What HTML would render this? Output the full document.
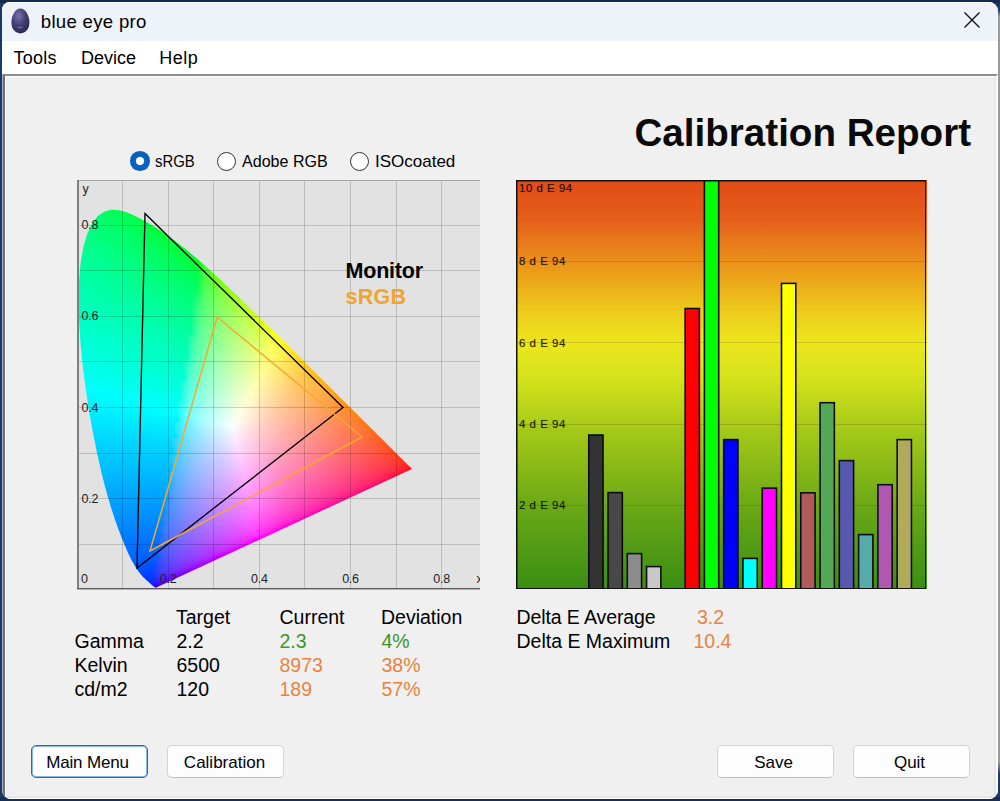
<!DOCTYPE html>
<html><head><meta charset="utf-8"><title>blue eye pro</title>
<style>
html,body{margin:0;padding:0}
body{width:1000px;height:801px;position:relative;overflow:hidden;background:#163a6c;font-family:"Liberation Sans",sans-serif;color:#000}
.a{position:absolute}
#win{left:2px;top:2px;width:996px;height:797px;background:#f0f0f0;border-radius:8px 9px 9px 9px;overflow:hidden}
#rs{left:996px;top:10px;width:4px;height:764px;background:linear-gradient(180deg,#163a6c 0,#9a9a9a 6px,#9a9a9a 752px,#163a6c 764px)}
#tb{left:0;top:0;width:100%;height:39px;background:#eef3f9;box-shadow:inset 0 1px 0 #fbfcfe}
#mb{left:0;top:39px;width:100%;height:33px;background:#fff}
#cl{left:0;top:72px;width:996px;height:725px;box-sizing:border-box;border-left:3.2px solid #707070;border-top:2px solid #8c8c8c;border-right:2px solid #fff;border-bottom:1.6px solid #fff;background:#f0f0f0;box-shadow:inset 1px 1px 0 #fff,inset -2px -2px 0 #e6e6e6}
#cl2{left:0;top:72px;width:1px;height:726px;background:#a8b0be}
.t{position:absolute;white-space:nowrap;line-height:1}
#cie{left:77px;top:180px;width:402.5px;height:409.5px;background:#e2e2e2;overflow:hidden}
#cie .bl{position:absolute;left:0;top:0;width:1.8px;height:100%;background:#808080}
#cie .bb{position:absolute;left:0;bottom:0;width:100%;height:2px;background:linear-gradient(180deg,#5e5e5e 0 1px,#b4b4b4 1px 2px)}
#cie .bt{position:absolute;left:0;top:-.5px;width:100%;height:1px;background:#a4a4a4}
#cie .f{position:absolute;left:0;top:0;width:402px;height:409px;clip-path:polygon(79.3px 407.6px,78.9px 407.7px,78.1px 407.6px,74.9px 404.9px,74.3px 404.5px,73.7px 403.9px,73.0px 403.3px,72.2px 402.6px,71.3px 401.8px,70.4px 401.0px,69.3px 400.0px,68.2px 399.0px,66.9px 397.8px,65.5px 396.4px,64.1px 394.8px,62.5px 392.8px,60.8px 390.4px,58.8px 387.4px,56.5px 383.5px,54.0px 379.0px,51.3px 373.5px,48.4px 366.8px,45.1px 358.8px,41.5px 349.4px,37.6px 338.4px,33.4px 325.5px,29.1px 310.7px,24.8px 294.0px,20.6px 275.4px,16.4px 254.9px,12.4px 233.0px,8.9px 210.3px,5.9px 187.3px,3.6px 164.4px,2.1px 142.2px,1.6px 121.2px,2.0px 101.7px,3.5px 83.7px,6.2px 67.8px,10.0px 54.4px,14.9px 43.8px,20.6px 36.3px,27.0px 31.7px,33.8px 29.7px,40.9px 29.9px,48.2px 31.8px,55.7px 34.7px,63.1px 38.4px,70.5px 42.4px,77.5px 46.7px,84.4px 51.2px,91.2px 55.9px,98.0px 60.8px,104.6px 65.9px,111.2px 71.3px,117.8px 76.8px,124.4px 82.5px,130.9px 88.3px,137.4px 94.2px,144.0px 100.2px,150.5px 106.4px,157.0px 112.6px,163.5px 118.8px,170.0px 125.2px,202.4px 157.0px,233.6px 188.0px,262.2px 216.5px,285.8px 240.0px,303.5px 257.6px,315.2px 269.3px,322.7px 276.7px,327.8px 281.8px,331.0px 285.0px,332.8px 286.8px,333.7px 287.7px,334.3px 288.3px,334.8px 288.8px,334.9px 288.9px)}
#cie .f i{position:absolute;display:block}
#cie b,#bc b{position:absolute;display:block;background:rgba(0,0,0,.17)}
#bc b{background:rgba(90,60,0,.22)}
#cie s,#bc s{position:absolute;text-decoration:none;font-size:12.5px;line-height:16px;color:#222;white-space:nowrap;letter-spacing:-.25px}
#cie svg{position:absolute;left:0;top:0}
#bc{left:516px;top:179.5px;width:410.5px;height:409.5px;background:linear-gradient(180deg,#e14b16 0%,#e5601a 10%,#eb961a 21%,#eecb1c 32%,#ece61c 40%,#d3e21c 49%,#a8cb18 60%,#6aa816 80%,#3a8e14 100%);overflow:hidden}
#bc u{position:absolute;display:block;box-sizing:border-box;border:1.6px solid #0a0a0a;text-decoration:none}
#bc s{font-size:11.5px;color:rgba(0,0,0,.74);letter-spacing:.5px;text-shadow:0 0 .7px rgba(0,0,0,.45)}
.rb{position:absolute;width:17px;height:17px;border-radius:50%;border:1.3px solid #333;background:#fff;box-sizing:content-box}
.rb.on{border:none;width:19.5px;height:19.5px;background:radial-gradient(circle,#fff 0 3.6px,#0a62be 4.6px)}
.rl{font-size:17px}
.tx{font-size:19.5px}
.or{color:#e9833f} .gr{color:#3c9628}
.btn{position:absolute;height:31px;width:115px;border:1px solid #d2d2d2;border-radius:5px;background:#fdfdfd;font-size:17px;text-align:center;line-height:34.6px;border-bottom-color:#bcbcbc}
.btn.def{border:1px solid #1b6ec2;box-shadow:inset 0 0 0 1px rgba(27,110,194,.5)}
</style></head><body>
<div id="rs" class="a"></div><div class="a" style="left:0;top:0;width:1000px;height:3px;background:#13294d"></div><div class="a" style="left:0;top:797px;width:1000px;height:4px;background:#182f52"></div>
<div id="win" class="a">
<div id="tb" class="a">
<svg class="a" style="left:8.3px;top:5px" width="22" height="28" viewBox="0 0 22 28"><defs><radialGradient id="eg" cx=".4" cy=".3" r=".75"><stop offset="0" stop-color="#7a72ac"/><stop offset=".5" stop-color="#453f78"/><stop offset="1" stop-color="#2a2648"/></radialGradient></defs><path d="M10.4 1.6C15.6 1.6 19.4 8.6 19.4 15.6 19.4 22 15.6 26.4 10.4 26.4 5.2 26.4 1.4 22 1.4 15.6 1.4 8.6 5.2 1.6 10.4 1.6Z" fill="url(#eg)"/><ellipse cx="10" cy="20.5" rx="2.6" ry=".7" fill="#8a84b4" opacity=".7"/></svg>
<span class="t" style="left:38.8px;top:10.6px;font-size:18.6px;letter-spacing:.3px">blue eye pro</span>
<svg class="a" style="left:961px;top:9px" width="18" height="18" viewBox="0 0 18 18"><path d="M1.5 1.5L16.5 16.5M16.5 1.5L1.5 16.5" stroke="#111" stroke-width="1.4" fill="none"/></svg>
</div>
<div id="mb" class="a">
<span class="t" style="left:11.5px;top:7.5px;font-size:18px;letter-spacing:.25px">Tools</span>
<span class="t" style="left:79px;top:7.5px;font-size:18px">Device</span>
<span class="t" style="left:157.3px;top:7.5px;font-size:18px;letter-spacing:.5px">Help</span>
</div>
<div id="cl" class="a"></div><div id="cl2" class="a"></div>
</div>
<div class="t" style="left:634.5px;top:113.7px;font-size:38.6px;font-weight:bold;color:#0a0a0a">Calibration Report</div>

<div class="rb on" style="left:130px;top:151px"></div><span class="t rl" style="left:155px;top:153px;transform:scaleX(.875);transform-origin:0 0">sRGB</span>
<div class="rb" style="left:216.5px;top:151.5px"></div><span class="t rl" style="left:242.4px;top:153px;transform:scaleX(.945);transform-origin:0 0">Adobe RGB</span>
<div class="rb" style="left:349.5px;top:151.5px"></div><span class="t rl" style="left:375px;top:153px;letter-spacing:0px">ISOcoated</span>

<div id="cie" class="a">
<div class="f">
<i style="left:30px;top:28px;width:14px;height:2px;background:linear-gradient(90deg,#00ff5e 0%,#00ff4f 100%)"></i>
<i style="left:24px;top:30px;width:27px;height:2px;background:linear-gradient(90deg,#00ff66 0%,#00ff49 100%)"></i>
<i style="left:21px;top:32px;width:35px;height:2px;background:linear-gradient(90deg,#00ff6a 0%,#00ff4c 85.71%,#00ff45 100%)"></i>
<i style="left:18px;top:34px;width:43px;height:2px;background:linear-gradient(90deg,#00ff6e 0%,#00ff4b 83.72%,#00ff40 100%)"></i>
<i style="left:17px;top:36px;width:48px;height:2px;background:linear-gradient(90deg,#00ff71 0%,#00ff4f 75%,#00ff3d 100%)"></i>
<i style="left:15px;top:38px;width:54px;height:2px;background:linear-gradient(90deg,#00ff74 0%,#00ff54 66.67%,#00ff39 100%)"></i>
<i style="left:14px;top:40px;width:58px;height:2px;background:linear-gradient(90deg,#00ff76 0%,#00ff58 62.07%,#00ff37 100%)"></i>
<i style="left:12px;top:42px;width:64px;height:2px;background:linear-gradient(90deg,#00ff79 0%,#00ff56 65.62%,#00ff3c 93.75%,#00ff33 100%)"></i>
<i style="left:11px;top:44px;width:68px;height:2px;background:linear-gradient(90deg,#00ff7c 0%,#00ff5a 61.76%,#00ff42 88.24%,#00ff30 100%)"></i>
<i style="left:10px;top:46px;width:72px;height:2px;background:linear-gradient(90deg,#00ff7e 0%,#00ff5d 58.33%,#00ff3c 91.67%,#00ff2e 100%)"></i>
<i style="left:10px;top:48px;width:75px;height:2px;background:linear-gradient(90deg,#00ff80 0%,#00ff60 56%,#00ff40 88%,#00ff2b 100%)"></i>
<i style="left:9px;top:50px;width:79px;height:2px;background:linear-gradient(90deg,#00ff82 0%,#00ff5d 60.76%,#00ff3b 91.14%,#00ff28 100%)"></i>
<i style="left:8px;top:52px;width:83px;height:2px;background:linear-gradient(90deg,#00ff84 0%,#00ff60 57.83%,#00ff41 86.75%,#00ff24 100%)"></i>
<i style="left:7px;top:54px;width:87px;height:2px;background:linear-gradient(90deg,#00ff86 0%,#00ff64 55.17%,#00ff46 82.76%,#00ff2c 96.55%,#00ff1f 100%)"></i>
<i style="left:7px;top:56px;width:90px;height:2px;background:linear-gradient(90deg,#00ff88 0%,#00ff66 53.33%,#00ff4a 80%,#00ff32 93.33%,#00ff1a 100%)"></i>
<i style="left:6px;top:58px;width:93px;height:2px;background:linear-gradient(90deg,#00ff8a 0%,#00ff64 58.06%,#00ff45 83.87%,#00ff29 96.77%,#00ff1a 100%)"></i>
<i style="left:5px;top:60px;width:97px;height:2px;background:linear-gradient(90deg,#00ff8c 0%,#00ff67 55.67%,#00ff4b 80.41%,#00ff33 92.78%,#00ff1a 98.97%,#00ff11 100%)"></i>
<i style="left:5px;top:62px;width:100px;height:2px;background:linear-gradient(90deg,#00ff8d 0%,#00ff69 54%,#00ff4e 78%,#00ff38 90%,#00ff25 96%,#00ff00 100%)"></i>
<i style="left:4px;top:64px;width:103px;height:2px;background:linear-gradient(90deg,#00ff8f 0%,#00ff67 58.25%,#00ff3f 87.38%,#00ff30 93.2%,#00ff12 99.03%,#00ff00 100%)"></i>
<i style="left:4px;top:66px;width:106px;height:2px;background:linear-gradient(90deg,#00ff91 0%,#00ff69 56.6%,#00ff4d 79.25%,#00ff36 90.57%,#00ff21 96.23%,#00ff00 100%)"></i>
<i style="left:3px;top:68px;width:109px;height:2px;background:linear-gradient(90deg,#00ff93 0%,#00ff6c 55.05%,#00ff49 82.57%,#00ff2e 93.58%,#00ff00 99.08%,#00ff00 100%)"></i>
<i style="left:3px;top:70px;width:112px;height:2px;background:linear-gradient(90deg,#00ff94 0%,#00ff73 48.21%,#00ff55 75%,#00ff34 91.07%,#00ff1c 96.43%,#00ff00 100%)"></i>
<i style="left:3px;top:72px;width:114px;height:2px;background:linear-gradient(90deg,#00ff96 0%,#00ff70 52.63%,#00ff50 78.95%,#00ff39 89.47%,#00ff27 94.74%,#00ff00 100%)"></i>
<i style="left:2px;top:74px;width:117px;height:2px;background:linear-gradient(90deg,#00ff98 0%,#00ff73 51.28%,#00ff54 76.92%,#00ff32 92.31%,#00ff15 97.44%,#00ff00 100%)"></i>
<i style="left:2px;top:76px;width:120px;height:2px;background:linear-gradient(90deg,#00ff99 0%,#00ff75 50%,#00ff57 75%,#00ff38 90%,#00ff23 95%,#00ff00 100%)"></i>
<i style="left:2px;top:78px;width:122px;height:2px;background:linear-gradient(90deg,#00ff9b 0%,#00ff73 54.1%,#00ff49 83.61%,#00ff2c 93.44%,#00ff00 98.36%,#00ff00 100%)"></i>
<i style="left:1px;top:80px;width:125px;height:2px;background:linear-gradient(90deg,#00ff9d 0%,#00ff7a 48%,#00ff57 76.8%,#00ff36 91.2%,#00ff1e 96%,#20ff00 100%)"></i>
<i style="left:1px;top:82px;width:128px;height:2px;background:linear-gradient(90deg,#00ff9e 0%,#00ff78 51.56%,#00ff52 79.69%,#00ff3b 89.06%,#00ff28 93.75%,#2eff00 98.44%,#3cff00 100%)"></i>
<i style="left:1px;top:84px;width:130px;height:2px;background:linear-gradient(90deg,#00ffa0 0%,#00ff7a 50.77%,#00ff55 78.46%,#00ff40 87.69%,#00ff30 92.31%,#30ff05 96.92%,#48ff00 100%)"></i>
<i style="left:1px;top:86px;width:132px;height:2px;background:linear-gradient(90deg,#00ffa1 0%,#00ff7c 50%,#00ff58 77.27%,#00ff37 90.91%,#33ff1f 95.45%,#51ff00 100%)"></i>
<i style="left:1px;top:88px;width:134px;height:2px;background:linear-gradient(90deg,#00ffa3 0%,#00ff79 53.73%,#00ff53 80.6%,#00ff3c 89.55%,#35ff29 94.03%,#53ff00 98.51%,#5aff00 100%)"></i>
<i style="left:0px;top:90px;width:138px;height:2px;background:linear-gradient(90deg,#00ffa4 0%,#00ff80 47.83%,#00ff5f 73.91%,#00ff43 86.96%,#30ff34 91.3%,#50ff19 95.65%,#65ff00 100%)"></i>
<i style="left:0px;top:92px;width:140px;height:2px;background:linear-gradient(90deg,#00ffa6 0%,#00ff7e 51.43%,#00ff5b 77.14%,#00ff48 85.71%,#32ff3a 90%,#52ff26 94.29%,#66ff00 98.57%,#6cff00 100%)"></i>
<i style="left:0px;top:94px;width:142px;height:2px;background:linear-gradient(90deg,#00ffa7 0%,#00ff80 50.7%,#00ff5e 76.06%,#00ff4c 84.51%,#35ff40 88.73%,#53ff2e 92.96%,#67ff00 97.18%,#72ff00 100%)"></i>
<i style="left:0px;top:96px;width:144px;height:2px;background:linear-gradient(90deg,#00ffa9 0%,#00ff82 50%,#00ff61 75%,#00ff4f 83.33%,#37ff44 87.5%,#55ff35 91.67%,#78ff00 100%)"></i>
<i style="left:0px;top:98px;width:146px;height:2px;background:linear-gradient(90deg,#00ffaa 0%,#00ff84 49.32%,#00ff63 73.97%,#00ff53 82.19%,#39ff49 86.3%,#56ff3b 90.41%,#69ff27 94.52%,#79ff00 98.63%,#7eff00 100%)"></i>
<i style="left:0px;top:100px;width:148px;height:2px;background:linear-gradient(90deg,#00ffac 0%,#00ff86 48.65%,#00ff5f 77.03%,#00ff57 81.08%,#3bff4d 85.14%,#57ff41 89.19%,#6bff2f 93.24%,#7aff00 97.3%,#83ff00 100%)"></i>
<i style="left:0px;top:102px;width:150px;height:2px;background:linear-gradient(90deg,#00ffad 0%,#00ff88 48%,#00ff62 76%,#00ff5a 80%,#3dff51 84%,#59ff45 88%,#6cff36 92%,#89ff00 100%)"></i>
<i style="left:0px;top:104px;width:153px;height:2px;background:linear-gradient(90deg,#00ffae 0%,#00ff8a 47.06%,#00ff65 74.51%,#00ff5d 78.43%,#3fff54 82.35%,#5aff4a 86.27%,#7cff28 94.12%,#8aff00 98.04%,#90ff00 100%)"></i>
<i style="left:0px;top:106px;width:155px;height:2px;background:linear-gradient(90deg,#00ffb0 0%,#00ff88 50.32%,#00ff60 77.42%,#41ff58 81.29%,#5bff4e 85.16%,#7dff30 92.9%,#8bff00 96.77%,#95ff00 100%)"></i>
<i style="left:0px;top:108px;width:157px;height:2px;background:linear-gradient(90deg,#00ffb1 0%,#00ff8e 45.86%,#00ff6a 72.61%,#00ff63 76.43%,#43ff5b 80.25%,#5dff52 84.08%,#7eff38 91.72%,#98ff00 99.36%,#9aff00 100%)"></i>
<i style="left:0px;top:110px;width:159px;height:2px;background:linear-gradient(90deg,#00ffb3 0%,#00ff8b 49.06%,#00ff6d 71.7%,#00ff66 75.47%,#45ff5f 79.25%,#5eff56 83.02%,#80ff3e 90.57%,#8dff29 94.34%,#99ff00 98.11%,#9eff00 100%)"></i>
<i style="left:0px;top:112px;width:161px;height:2px;background:linear-gradient(90deg,#00ffb4 0%,#00ff8d 48.45%,#00ff69 74.53%,#47ff62 78.26%,#72ff4f 85.71%,#8eff32 93.17%,#9aff00 96.89%,#a3ff00 100%)"></i>
<i style="left:0px;top:114px;width:163px;height:2px;background:linear-gradient(90deg,#00ffb6 0%,#00ff8f 47.85%,#00ff72 69.94%,#0eff6c 73.62%,#48ff65 77.3%,#61ff5d 80.98%,#8fff39 92.02%,#a6ff00 99.39%,#a8ff00 100%)"></i>
<i style="left:0px;top:116px;width:165px;height:2px;background:linear-gradient(90deg,#00ffb7 0%,#00ff8d 50.91%,#00ff75 69.09%,#18ff6f 72.73%,#4aff68 76.36%,#74ff57 83.64%,#90ff3f 90.91%,#9cff2a 94.55%,#a7ff00 98.18%,#acff00 100%)"></i>
<i style="left:0px;top:118px;width:167px;height:2px;background:linear-gradient(90deg,#00ffb9 0%,#00ff8f 50.3%,#00ff77 68.26%,#1eff71 71.86%,#4cff6b 75.45%,#75ff5b 82.63%,#91ff44 89.82%,#9dff33 93.41%,#a8ff00 97.01%,#b1ff00 100%)"></i>
<i style="left:0px;top:120px;width:169px;height:2px;background:linear-gradient(90deg,#00ffba 0%,#00ff95 46.15%,#00ff7a 67.46%,#23ff74 71.01%,#4dff6e 74.56%,#76ff5e 81.66%,#9eff3a 92.31%,#b3ff00 99.41%,#b5ff00 100%)"></i>
<i style="left:0px;top:122px;width:171px;height:2px;background:linear-gradient(90deg,#00ffbb 0%,#00ff97 45.61%,#00ff7c 66.67%,#4fff70 73.68%,#77ff62 80.7%,#9fff40 91.23%,#aaff2b 94.74%,#b4ff00 98.25%,#b9ff00 100%)"></i>
<i style="left:0px;top:124px;width:173px;height:2px;background:linear-gradient(90deg,#00ffbd 0%,#00ff99 45.09%,#00ff7f 65.9%,#51ff73 72.83%,#78ff65 79.77%,#a0ff45 90.17%,#abff34 93.64%,#b5ff00 97.11%,#beff00 100%)"></i>
<i style="left:0px;top:126px;width:175px;height:2px;background:linear-gradient(90deg,#00ffbe 0%,#00ff9b 44.57%,#00ff81 65.14%,#2dff7c 68.57%,#52ff76 72%,#7aff68 78.86%,#a1ff4a 89.14%,#acff3b 92.57%,#c0ff00 99.43%,#c2ff00 100%)"></i>
<i style="left:0px;top:128px;width:177px;height:2px;background:linear-gradient(90deg,#00ffc0 0%,#00ff9d 44.07%,#00ff83 64.41%,#30ff7e 67.8%,#54ff78 71.19%,#7bff6b 77.97%,#a2ff4f 88.14%,#adff41 91.53%,#b8ff2c 94.92%,#c1ff00 98.31%,#c6ff00 100%)"></i>
<i style="left:0px;top:130px;width:180px;height:2px;background:linear-gradient(90deg,#00ffc1 0%,#00ff9f 43.33%,#00ff86 63.33%,#33ff81 66.67%,#55ff7b 70%,#7cff6e 76.67%,#a3ff54 86.67%,#b9ff35 93.33%,#c3ff00 96.67%,#ccff00 100%)"></i>
<i style="left:0px;top:132px;width:182px;height:2px;background:linear-gradient(90deg,#00ffc3 0%,#00ff9d 46.15%,#00ff88 62.64%,#36ff83 65.93%,#57ff7e 69.23%,#7dff71 75.82%,#b0ff4c 89.01%,#baff3c 92.31%,#c4ff22 95.6%,#cdff00 98.9%,#d0ff00 100%)"></i>
<i style="left:0px;top:134px;width:184px;height:2px;background:linear-gradient(90deg,#00ffc4 0%,#00ffa2 42.39%,#00ff8a 61.96%,#38ff85 65.22%,#58ff80 68.48%,#7eff74 75%,#b1ff51 88.04%,#bbff43 91.3%,#c5ff2e 94.57%,#ceff00 97.83%,#d4ff00 100%)"></i>
<i style="left:0px;top:136px;width:186px;height:2px;background:linear-gradient(90deg,#00ffc6 0%,#00ffa1 45.16%,#00ff8d 61.29%,#3bff88 64.52%,#5aff83 67.74%,#80ff77 74.19%,#b2ff55 87.1%,#c6ff36 93.55%,#cfff07 96.77%,#d8ff00 100%)"></i>
<i style="left:0px;top:138px;width:188px;height:2px;background:linear-gradient(90deg,#00ffc7 0%,#00ffa3 44.68%,#00ff8f 60.64%,#3dff8a 63.83%,#5bff85 67.02%,#81ff79 73.4%,#b3ff59 86.17%,#c7ff3e 92.55%,#d1ff23 95.74%,#daff00 98.94%,#ddff00 100%)"></i>
<i style="left:0px;top:140px;width:190px;height:2px;background:linear-gradient(90deg,#00ffc9 0%,#00ffa5 44.21%,#00ff91 60%,#3fff8d 63.16%,#5dff88 66.32%,#90ff76 75.79%,#beff52 88.42%,#c8ff44 91.58%,#d2ff2f 94.74%,#dbff00 97.89%,#e1ff00 100%)"></i>
<i style="left:0px;top:142px;width:192px;height:2px;background:linear-gradient(90deg,#00ffca 0%,#00ffa7 43.75%,#00ff93 59.38%,#41ff8f 62.5%,#5eff8a 65.62%,#83ff7f 71.88%,#c0ff57 87.5%,#d3ff38 93.75%,#dcff0c 96.88%,#e5ff00 100%)"></i>
<i style="left:0px;top:144px;width:194px;height:2px;background:linear-gradient(90deg,#00ffcc 0%,#00ffa5 46.39%,#00ff96 58.76%,#44ff91 61.86%,#60ff8c 64.95%,#93ff7c 74.23%,#c1ff5b 86.6%,#d4ff3f 92.78%,#ddff25 95.88%,#e6ff00 98.97%,#e9ff00 100%)"></i>
<i style="left:0px;top:146px;width:196px;height:2px;background:linear-gradient(90deg,#00ffcd 0%,#00ffab 42.86%,#00ff98 58.16%,#46ff93 61.22%,#61ff8f 64.29%,#94ff7e 73.47%,#c2ff5f 85.71%,#d6ff46 91.84%,#dfff30 94.9%,#e8ff00 97.96%,#edff00 100%)"></i>
<i style="left:0px;top:148px;width:198px;height:2px;background:linear-gradient(90deg,#00ffcf 0%,#00ffa9 45.45%,#00ff9a 57.58%,#48ff96 60.61%,#63ff91 63.64%,#95ff81 72.73%,#c3ff63 84.85%,#d7ff4b 90.91%,#e0ff39 93.94%,#e9ff10 96.97%,#f2ff00 100%)"></i>
<i style="left:0px;top:150px;width:200px;height:2px;background:linear-gradient(90deg,#00ffd0 0%,#00ffae 42%,#00ff9c 57%,#49ff98 60%,#64ff94 63%,#88ff89 69%,#c4ff67 84%,#d8ff51 90%,#e1ff41 93%,#eaff26 96%,#f3ff00 99%,#f6ff00 100%)"></i>
<i style="left:0px;top:152px;width:202px;height:2px;background:linear-gradient(90deg,#00ffd2 0%,#00ffaa 47.52%,#00ff9f 56.44%,#4bff9a 59.41%,#66ff96 62.38%,#97ff87 71.29%,#d0ff61 86.14%,#e3ff47 92.08%,#ecff32 95.05%,#f4ff00 98.02%,#faff00 100%)"></i>
<i style="left:0px;top:154px;width:204px;height:2px;background:linear-gradient(90deg,#00ffd3 0%,#00ffaf 44.12%,#00ffa5 52.94%,#11ffa1 55.88%,#4dff9d 58.82%,#67ff98 61.76%,#99ff89 70.59%,#d1ff65 85.29%,#e4ff4d 91.18%,#edff3b 94.12%,#f6ff12 97.06%,#feff00 100%)"></i>
<i style="left:1px;top:156px;width:205px;height:2px;background:linear-gradient(90deg,#00ffd4 0%,#00ffb4 40.98%,#00ffa6 52.68%,#54ff9e 58.54%,#7fff95 64.39%,#b4ff7f 76.1%,#deff5d 87.8%,#f0ff3f 93.66%,#fffd00 99.51%,#fffb00 100%)"></i>
<i style="left:1px;top:158px;width:207px;height:2px;background:linear-gradient(90deg,#00ffd6 0%,#00ffb6 40.58%,#00ffa8 52.17%,#56ffa0 57.97%,#80ff98 63.77%,#c1ff7b 78.26%,#e8ff55 89.86%,#f1ff46 92.75%,#faff2e 95.65%,#fffb00 98.55%,#fff700 100%)"></i>
<i style="left:1px;top:160px;width:209px;height:2px;background:linear-gradient(90deg,#00ffd8 0%,#00ffb4 43.06%,#00ffaa 51.67%,#31ffa7 54.55%,#57ffa3 57.42%,#81ff9a 63.16%,#b7ff85 74.64%,#e0ff65 86.12%,#f3ff4c 91.87%,#fcff38 94.74%,#fffa00 97.61%,#fff300 100%)"></i>
<i style="left:1px;top:162px;width:211px;height:2px;background:linear-gradient(90deg,#00ffd9 0%,#00ffb6 42.65%,#00ffac 51.18%,#35ffa9 54.03%,#59ffa5 56.87%,#82ff9c 62.56%,#b8ff88 73.93%,#ebff5f 88.15%,#fdff40 93.84%,#fff000 99.53%,#ffef00 100%)"></i>
<i style="left:1px;top:164px;width:213px;height:2px;background:linear-gradient(90deg,#00ffdb 0%,#00ffb8 42.25%,#00ffaf 50.7%,#37ffab 53.52%,#5bffa7 56.34%,#84ff9f 61.97%,#c5ff84 76.06%,#ecff63 87.32%,#ffff48 92.96%,#fff72e 95.77%,#ffef00 98.59%,#ffeb00 100%)"></i>
<i style="left:1px;top:166px;width:215px;height:2px;background:linear-gradient(90deg,#00ffdc 0%,#00ffba 41.86%,#00ffb1 50.23%,#3affad 53.02%,#5cffa9 55.81%,#85ffa1 61.4%,#c6ff87 75.35%,#eeff67 86.51%,#fffe4e 92.09%,#fff538 94.88%,#ffee00 97.67%,#ffe700 100%)"></i>
<i style="left:1px;top:168px;width:217px;height:2px;background:linear-gradient(90deg,#00ffde 0%,#00ffbc 41.47%,#00ffb3 49.77%,#3dffaf 52.53%,#5effac 55.3%,#86ffa4 60.83%,#bcff90 71.89%,#e6ff75 82.95%,#fffc53 91.24%,#fff43f 94.01%,#ffe500 99.54%,#ffe400 100%)"></i>
<i style="left:2px;top:170px;width:218px;height:2px;background:linear-gradient(90deg,#00ffdf 0%,#00ffbb 44.04%,#00ffb4 49.54%,#46ffb1 52.29%,#64ffad 55.05%,#9affa1 63.3%,#dfff7f 79.82%,#fcff63 88.07%,#fff142 93.58%,#ffe928 96.33%,#ffe200 99.08%,#ffe000 100%)"></i>
<i style="left:2px;top:172px;width:220px;height:2px;background:linear-gradient(90deg,#00ffe1 0%,#00ffbd 43.64%,#00ffb7 49.09%,#48ffb3 51.82%,#65ffb0 54.55%,#9bffa3 62.73%,#d6ff89 76.36%,#fdff68 87.27%,#fff048 92.73%,#ffe832 95.45%,#ffe100 98.18%,#ffdd00 100%)"></i>
<i style="left:2px;top:174px;width:222px;height:2px;background:linear-gradient(90deg,#00ffe2 0%,#00ffbf 43.24%,#00ffb9 48.65%,#4affb5 51.35%,#67ffb2 54.05%,#8dffaa 59.46%,#c2ff98 70.27%,#f5ff76 83.78%,#ffff6c 86.49%,#ffee4e 91.89%,#ffe73a 94.59%,#ffe017 97.3%,#ffd900 100%)"></i>
<i style="left:2px;top:176px;width:224px;height:2px;background:linear-gradient(90deg,#00ffe4 0%,#00ffc1 42.86%,#00ffbb 48.21%,#4dffb8 50.89%,#69ffb4 53.57%,#9dffa8 61.61%,#d9ff8f 75%,#fffe70 85.71%,#ffe541 93.75%,#ffde27 96.43%,#ffd800 99.11%,#ffd600 100%)"></i>
<i style="left:2px;top:178px;width:226px;height:2px;background:linear-gradient(90deg,#00ffe5 0%,#00ffc6 39.82%,#00ffbd 47.79%,#4fffba 50.44%,#7fffb3 55.75%,#b9ffa2 66.37%,#f9ff7d 82.3%,#fff365 87.61%,#ffe447 92.92%,#ffdd31 95.58%,#ffd600 98.23%,#ffd200 100%)"></i>
<i style="left:3px;top:180px;width:227px;height:2px;background:linear-gradient(90deg,#00ffe7 0%,#00ffc2 44.93%,#27ffbf 47.58%,#56ffbc 50.22%,#83ffb5 55.51%,#bcffa4 66.08%,#fcff7f 81.94%,#ffe149 92.51%,#ffda35 95.15%,#ffd400 97.8%,#ffcf00 100%)"></i>
<i style="left:3px;top:182px;width:229px;height:2px;background:linear-gradient(90deg,#00ffe8 0%,#00ffc7 41.92%,#00ffc4 44.54%,#58ffbe 49.78%,#85ffb7 55.02%,#beffa6 65.5%,#fdff83 81.22%,#ffe04e 91.7%,#ffd93c 94.32%,#ffcd00 99.56%,#ffcc00 100%)"></i>
<i style="left:3px;top:184px;width:231px;height:2px;background:linear-gradient(90deg,#00ffea 0%,#00ffc9 41.56%,#00ffc6 44.16%,#5affc0 49.35%,#86ffb9 54.55%,#bfffa9 64.94%,#ffff86 80.52%,#ffd842 93.51%,#ffd12c 96.1%,#ffcb00 98.7%,#ffc900 100%)"></i>
<i style="left:3px;top:186px;width:233px;height:2px;background:linear-gradient(90deg,#00ffec 0%,#00ffcb 41.2%,#00ffc8 43.78%,#33ffc5 46.35%,#5bffc2 48.93%,#87ffbc 54.08%,#c1ffac 64.38%,#fffd89 79.83%,#ffd647 92.7%,#ffd034 95.28%,#ffca04 97.85%,#ffc600 100%)"></i>
<i style="left:4px;top:188px;width:234px;height:2px;background:linear-gradient(90deg,#00ffed 0%,#00ffca 43.59%,#3fffc7 46.15%,#62ffc4 48.72%,#8cffbd 53.85%,#c4ffae 64.1%,#faff93 76.92%,#fff17d 82.05%,#ffd449 92.31%,#ffce38 94.87%,#ffc200 100%)"></i>
<i style="left:4px;top:190px;width:236px;height:2px;background:linear-gradient(90deg,#00ffef 0%,#00ffcc 43.22%,#42ffc9 45.76%,#64ffc6 48.31%,#8dffc0 53.39%,#c5ffb0 63.56%,#fcff96 76.27%,#ffd24e 91.53%,#ffcc3e 94.07%,#ffc727 96.61%,#ffc100 99.15%,#ffbf00 100%)"></i>
<i style="left:4px;top:192px;width:238px;height:2px;background:linear-gradient(90deg,#00fff1 0%,#00ffce 42.86%,#44ffcc 45.38%,#65ffc9 47.9%,#8fffc2 52.94%,#d3ffaf 65.55%,#fdff9a 75.63%,#ffd152 90.76%,#ffc530 95.8%,#ffc000 98.32%,#ffbc00 100%)"></i>
<i style="left:4px;top:194px;width:240px;height:2px;background:linear-gradient(90deg,#00fff2 0%,#00ffd1 42.5%,#47ffce 45%,#67ffcb 47.5%,#90ffc5 52.5%,#c8ffb6 62.5%,#ffff9d 75%,#ffd662 87.5%,#ffc437 95%,#ffb900 100%)"></i>
<i style="left:5px;top:196px;width:241px;height:2px;background:linear-gradient(90deg,#00fff4 0%,#00ffd2 42.32%,#50ffd0 44.81%,#6dffcd 47.3%,#a4ffc3 54.77%,#e3ffaf 67.22%,#fffb9d 74.69%,#ffcd57 89.63%,#ffc23a 94.61%,#ffbc21 97.1%,#ffb700 99.59%,#ffb600 100%)"></i>
<i style="left:5px;top:198px;width:243px;height:2px;background:linear-gradient(90deg,#00fff5 0%,#00ffd5 41.98%,#52ffd2 44.44%,#6fffcf 46.91%,#a6ffc6 54.32%,#faffa8 71.6%,#fff093 76.54%,#ffc64e 91.36%,#ffbb2b 96.3%,#ffb600 98.77%,#ffb400 100%)"></i>
<i style="left:5px;top:200px;width:245px;height:2px;background:linear-gradient(90deg,#00fff7 0%,#00ffd9 39.18%,#11ffd7 41.63%,#54ffd4 44.08%,#70ffd1 46.53%,#a7ffc8 53.88%,#e6ffb5 66.12%,#fcffab 71.02%,#ffca5e 88.16%,#ffbf44 93.06%,#ffba32 95.51%,#ffb50e 97.96%,#ffb100 100%)"></i>
<i style="left:5px;top:202px;width:247px;height:2px;background:linear-gradient(90deg,#00fff9 0%,#00ffdc 38.87%,#1cffd9 41.3%,#56ffd6 43.72%,#72ffd4 46.15%,#a8ffcb 53.44%,#e8ffb8 65.59%,#feffae 70.45%,#ffcf6c 85.02%,#ffb839 94.74%,#ffb321 97.17%,#ffaf00 99.6%,#ffae00 100%)"></i>
<i style="left:6px;top:204px;width:248px;height:2px;background:linear-gradient(90deg,#00fffa 0%,#00ffdd 38.71%,#32ffdb 41.13%,#5dffd8 43.55%,#8cffd3 48.39%,#c8ffc6 58.06%,#fffdaf 70.16%,#ffcc6d 84.68%,#ffb63b 94.35%,#ffb126 96.77%,#ffac00 99.19%,#ffab00 100%)"></i>
<i style="left:6px;top:206px;width:250px;height:2px;background:linear-gradient(90deg,#00fffc 0%,#00ffe0 38.4%,#36ffdd 40.8%,#5fffdb 43.2%,#8dffd5 48%,#c9ffc8 57.6%,#f8ffb8 67.2%,#fffbb1 69.6%,#ffcb70 84%,#ffb540 93.6%,#ffb02e 96%,#ffab00 98.4%,#ffa800 100%)"></i>
<i style="left:6px;top:208px;width:252px;height:2px;background:linear-gradient(90deg,#00fffe 0%,#00ffe2 38.1%,#39ffe0 40.48%,#61ffdd 42.86%,#8fffd8 47.62%,#cbffcb 57.14%,#faffbb 66.67%,#ffefa7 71.43%,#ffbe5d 88.1%,#ffae35 95.24%,#ffa500 100%)"></i>
<i style="left:6px;top:210px;width:254px;height:2px;background:linear-gradient(90deg,#00feff 0%,#00ffe4 37.8%,#3cffe2 40.16%,#63ffdf 42.52%,#90ffda 47.24%,#cdffce 56.69%,#fcffbe 66.14%,#ffc875 82.68%,#ffb249 92.13%,#ffa826 96.85%,#ffa400 99.21%,#ffa300 100%)"></i>
<i style="left:7px;top:212px;width:255px;height:2px;background:linear-gradient(90deg,#00fdff 0%,#00ffed 30.59%,#00ffe6 37.65%,#48ffe4 40%,#6affe1 42.35%,#95ffdc 47.06%,#d0ffd0 56.47%,#fffec0 65.88%,#ffd389 77.65%,#ffb04a 91.76%,#ffa62a 96.47%,#ffa200 98.82%,#ffa000 100%)"></i>
<i style="left:7px;top:214px;width:257px;height:2px;background:linear-gradient(90deg,#00fbff 0%,#00fff6 21.01%,#00ffe9 37.35%,#4affe6 39.69%,#6cffe4 42.02%,#97ffdf 46.69%,#d2ffd3 56.03%,#fffcc2 65.37%,#ffca81 79.38%,#ffa941 93.39%,#ffa531 95.72%,#ffa111 98.05%,#ff9d00 100%)"></i>
<i style="left:7px;top:216px;width:259px;height:2px;background:linear-gradient(90deg,#00f9ff 0%,#00fffa 18.53%,#00ffeb 37.07%,#4dffe9 39.38%,#6dffe6 41.7%,#98ffe1 46.33%,#d4ffd5 55.6%,#f8ffcb 62.55%,#fffbc3 64.86%,#ffcf8d 76.45%,#ffad52 90.35%,#ffa437 94.98%,#ff9f21 97.3%,#ff9b00 99.61%,#ff9a00 100%)"></i>
<i style="left:8px;top:218px;width:260px;height:2px;background:linear-gradient(90deg,#00f7ff 0%,#00fffc 18.46%,#00ffed 36.92%,#56ffeb 39.23%,#74ffe8 41.54%,#adffe1 48.46%,#f0ffd1 60%,#fcffcd 62.31%,#ffcd8d 76.15%,#ffa647 92.31%,#ff9d25 96.92%,#ff9900 99.23%,#ff9800 100%)"></i>
<i style="left:8px;top:220px;width:262px;height:2px;background:linear-gradient(90deg,#00f6ff 0%,#00fffb 22.9%,#00fff1 34.35%,#13ffef 36.64%,#58ffed 38.93%,#8cffe8 43.51%,#ccffde 52.67%,#feffd0 61.83%,#ffcb8f 75.57%,#ffa44b 91.6%,#ff9c2d 96.18%,#ff9800 98.47%,#ff9500 100%)"></i>
<i style="left:8px;top:222px;width:264px;height:2px;background:linear-gradient(90deg,#00f4ff 0%,#00fffb 25%,#00fff4 34.09%,#1efff2 36.36%,#5afff0 38.64%,#77ffed 40.91%,#b1ffe6 47.73%,#fffed3 61.36%,#ffd19b 72.73%,#ffa34e 90.91%,#ff9a33 95.45%,#ff9200 100%)"></i>
<i style="left:9px;top:224px;width:265px;height:2px;background:linear-gradient(90deg,#00f2ff 0%,#00fffd 24.91%,#00fff6 33.96%,#62fff2 38.49%,#92ffed 43.02%,#d2ffe3 52.08%,#f8ffd9 58.87%,#fffad2 61.13%,#ffce9b 72.45%,#ffa55a 88.3%,#ff9836 95.09%,#ff9421 97.36%,#ff9000 99.62%,#ff8f00 100%)"></i>
<i style="left:9px;top:226px;width:267px;height:2px;background:linear-gradient(90deg,#00f1ff 0%,#00fffc 29.21%,#00fff8 33.71%,#38fff6 35.96%,#64fff4 38.2%,#94fff0 42.7%,#d4ffe6 51.69%,#faffdc 58.43%,#ffeec7 62.92%,#ffc593 74.16%,#ff9b48 92.13%,#ff9329 96.63%,#ff8f00 98.88%,#ff8d00 100%)"></i>
<i style="left:9px;top:228px;width:269px;height:2px;background:linear-gradient(90deg,#00efff 0%,#00fffd 31.23%,#00fffb 33.46%,#3cfff9 35.69%,#66fff7 37.92%,#96fff3 42.38%,#d5ffe8 51.3%,#fcffdf 57.99%,#ffca9e 71.38%,#ff9e56 89.22%,#ff9130 95.91%,#ff8a00 100%)"></i>
<i style="left:9px;top:230px;width:271px;height:2px;background:linear-gradient(90deg,#00edff 0%,#00fffd 33.21%,#3ffffb 35.42%,#68fff9 37.64%,#98fff5 42.07%,#d7ffeb 50.92%,#feffe3 57.56%,#ffd0a9 68.63%,#ffa162 86.35%,#ff9035 95.2%,#ff8c21 97.42%,#ff8800 99.63%,#ff8700 100%)"></i>
<i style="left:10px;top:232px;width:272px;height:2px;background:linear-gradient(90deg,#00ecff 0%,#00ffff 33.09%,#4bfffe 35.29%,#6ffffc 37.5%,#9cfff8 41.91%,#dcffee 50.74%,#fffce2 57.35%,#ffd5b3 66.18%,#ffa874 81.62%,#ff9245 92.65%,#ff8a25 97.06%,#ff8600 99.26%,#ff8500 100%)"></i>
<i style="left:10px;top:234px;width:274px;height:2px;background:linear-gradient(90deg,#00eaff 0%,#00fcff 32.85%,#4dfeff 35.04%,#71fffe 37.23%,#9efffa 41.61%,#ddfff1 50.36%,#f8ffeb 54.74%,#fffae4 56.93%,#ffd3b5 65.69%,#ffa776 81.02%,#ff8c3c 94.16%,#ff882c 96.35%,#ff8400 98.54%,#ff8200 100%)"></i>
<i style="left:10px;top:236px;width:276px;height:2px;background:linear-gradient(90deg,#00e8ff 0%,#00faff 32.61%,#4ffbff 34.78%,#72fdff 36.96%,#a0fffd 41.3%,#dffff4 50%,#faffef 54.35%,#ffecd8 58.7%,#ffbc9a 71.74%,#ff8f4b 91.3%,#ff8732 95.65%,#ff7f00 100%)"></i>
<i style="left:11px;top:238px;width:277px;height:2px;background:linear-gradient(90deg,#00e7ff 0%,#00f7ff 32.49%,#58f9ff 34.66%,#90fdff 38.99%,#c7fffb 45.49%,#fefff1 54.15%,#ffceb6 64.98%,#ff9e70 82.31%,#ff8842 93.14%,#ff8121 97.47%,#ff7d00 99.64%,#ff7c00 100%)"></i>
<i style="left:11px;top:240px;width:279px;height:2px;background:linear-gradient(90deg,#00e5ff 0%,#00f3ff 30.11%,#15f5ff 32.26%,#59f6ff 34.41%,#78f8ff 36.56%,#b7feff 43.01%,#f3fff7 51.61%,#fffef3 53.76%,#ffccb7 64.52%,#ff9d72 81.72%,#ff8745 92.47%,#ff7f28 96.77%,#ff7b00 98.92%,#ff7a00 100%)"></i>
<i style="left:12px;top:242px;width:280px;height:2px;background:linear-gradient(90deg,#00e3ff 0%,#00f1ff 30%,#60f4ff 34.29%,#94f7ff 38.57%,#dcffff 47.14%,#f8fffa 51.43%,#fff9f2 53.57%,#ffd1c1 62.14%,#ffa483 77.14%,#ff8547 92.14%,#ff7d2c 96.43%,#ff7908 98.57%,#ff7700 100%)"></i>
<i style="left:12px;top:244px;width:282px;height:2px;background:linear-gradient(90deg,#00e2ff 0%,#00efff 29.79%,#62f2ff 34.04%,#94f5ff 38.3%,#ecfeff 48.94%,#fafffd 51.06%,#ffebe5 55.32%,#ffc0af 65.96%,#ff946d 82.98%,#ff7f3f 93.62%,#ff7b31 95.74%,#ff781c 97.87%,#ff7400 100%)"></i>
<i style="left:12px;top:246px;width:284px;height:2px;background:linear-gradient(90deg,#00e0ff 0%,#00edff 29.58%,#37eeff 31.69%,#63efff 33.8%,#94f2ff 38.03%,#dbf9ff 46.48%,#fbfdff 50.7%,#ffd6ce 59.15%,#ffac96 71.83%,#ff814d 90.85%,#ff7a36 95.07%,#ff7625 97.18%,#ff7200 99.3%,#ff7100 100%)"></i>
<i style="left:13px;top:248px;width:285px;height:2px;background:linear-gradient(90deg,#00deff 0%,#00eaff 29.47%,#44ecff 31.58%,#69edff 33.68%,#abf1ff 40%,#fcfbff 50.53%,#ffcac3 61.05%,#ff997f 77.89%,#ff7b44 92.63%,#ff7428 96.84%,#ff7000 98.95%,#ff6e00 100%)"></i>
<i style="left:13px;top:250px;width:287px;height:2px;background:linear-gradient(90deg,#00ddff 0%,#00e8ff 29.27%,#46e9ff 31.36%,#6aeaff 33.45%,#98edff 37.63%,#fbf7ff 50.17%,#ffd1cf 58.54%,#ffa798 71.08%,#ff7a47 91.99%,#ff722e 96.17%,#ff6b00 100%)"></i>
<i style="left:13px;top:252px;width:289px;height:2px;background:linear-gradient(90deg,#00dbff 0%,#00e6ff 29.07%,#48e7ff 31.14%,#6be8ff 33.22%,#abecff 39.45%,#faf4ff 49.83%,#ffe1e7 53.98%,#ffb1aa 66.44%,#ff805c 87.2%,#ff7033 95.5%,#ff6d21 97.58%,#ff6900 99.65%,#ff6800 100%)"></i>
<i style="left:14px;top:254px;width:290px;height:2px;background:linear-gradient(90deg,#00daff 0%,#00e4ff 28.97%,#51e5ff 31.03%,#70e6ff 33.1%,#ade9ff 39.31%,#fcf1ff 49.66%,#ffbcbc 62.07%,#ff8a74 80.69%,#ff7241 93.1%,#ff6a25 97.24%,#ff6700 99.31%,#ff6500 100%)"></i>
<i style="left:14px;top:256px;width:292px;height:2px;background:linear-gradient(90deg,#00d8ff 0%,#00e1ff 28.77%,#52e2ff 30.82%,#71e3ff 32.88%,#ade7ff 39.04%,#fbeeff 49.32%,#ffc9d1 57.53%,#ff9c93 71.92%,#ff744e 90.41%,#ff692b 96.58%,#ff650d 98.63%,#ff6200 100%)"></i>
<i style="left:15px;top:258px;width:293px;height:2px;background:linear-gradient(90deg,#00d6ff 0%,#00deff 26.62%,#26dfff 28.67%,#59e0ff 30.72%,#8be2ff 34.81%,#d0e7ff 43%,#fcebff 49.15%,#ffb7bd 61.43%,#ff8b7d 77.82%,#ff6e46 92.15%,#ff662e 96.25%,#ff5f00 100%)"></i>
<i style="left:15px;top:260px;width:295px;height:2px;background:linear-gradient(90deg,#00d5ff 0%,#00dcff 26.44%,#5bdeff 30.51%,#8ce0ff 34.58%,#cfe4ff 42.71%,#fbe8ff 48.81%,#ffc4d1 56.95%,#ff9795 71.19%,#ff6c49 91.53%,#ff6432 95.59%,#ff6021 97.63%,#ff5d00 99.66%,#ff5c00 100%)"></i>
<i style="left:15px;top:262px;width:297px;height:2px;background:linear-gradient(90deg,#00d3ff 0%,#00daff 26.26%,#5cdbff 30.3%,#8cddff 34.34%,#cfe1ff 42.42%,#fbe5ff 48.48%,#ffc2d2 56.57%,#ff9696 70.71%,#ff6a4b 90.91%,#ff6237 94.95%,#ff5e28 96.97%,#ff5b00 98.99%,#ff5900 100%)"></i>
<i style="left:16px;top:264px;width:298px;height:2px;background:linear-gradient(90deg,#00d1ff 0%,#00d8ff 26.17%,#3cd9ff 28.19%,#62d9ff 30.2%,#90dbff 34.23%,#eee1ff 46.31%,#fce2ff 48.32%,#ffb0bf 60.4%,#ff807a 78.52%,#ff6343 92.62%,#ff5c2a 96.64%,#ff5500 100%)"></i>
<i style="left:16px;top:266px;width:300px;height:2px;background:linear-gradient(90deg,#00d0ff 0%,#00d6ff 26%,#3ed6ff 28%,#63d7ff 30%,#90d8ff 34%,#dfddff 44%,#fbdfff 48%,#ffbdd3 56%,#ff9198 70%,#ff6146 92%,#ff5a30 96%,#ff561c 98%,#ff5200 100%)"></i>
<i style="left:17px;top:268px;width:301px;height:2px;background:linear-gradient(90deg,#00ceff 0%,#00d4ff 25.91%,#48d4ff 27.91%,#68d5ff 29.9%,#93d6ff 33.89%,#e1daff 43.85%,#fddcff 47.84%,#ffabbf 59.8%,#ff7775 79.73%,#ff5b3e 93.69%,#ff5321 97.67%,#ff4f00 99.67%,#ff4e00 100%)"></i>
<i style="left:17px;top:270px;width:303px;height:2px;background:linear-gradient(90deg,#00cdff 0%,#00d1ff 25.74%,#4ad2ff 27.72%,#69d2ff 29.7%,#93d4ff 33.66%,#fcd9ff 47.52%,#ffa9c1 59.41%,#ff7577 79.21%,#ff5941 93.07%,#ff5027 97.03%,#ff4c00 99.01%,#ff4a00 100%)"></i>
<i style="left:17px;top:272px;width:305px;height:2px;background:linear-gradient(90deg,#00cbff 0%,#00cfff 25.57%,#4bd0ff 27.54%,#6ad0ff 29.51%,#a4d2ff 35.41%,#fbd6ff 47.21%,#ffb5d4 55.08%,#ff8693 70.82%,#ff5a4d 90.49%,#ff4e2d 96.39%,#ff4a18 98.36%,#ff4600 100%)"></i>
<i style="left:18px;top:274px;width:306px;height:2px;background:linear-gradient(90deg,#00c9ff 0%,#00cdff 23.53%,#18cdff 25.49%,#53cdff 27.45%,#6fceff 29.41%,#a7cfff 35.29%,#fcd3ff 47.06%,#ff9eb9 60.78%,#ff6464 84.31%,#ff4f3b 94.12%,#ff461d 98.04%,#ff4200 100%)"></i>
<i style="left:18px;top:276px;width:308px;height:2px;background:linear-gradient(90deg,#00c8ff 0%,#00cbff 23.38%,#1fcbff 25.32%,#54cbff 27.27%,#85ccff 31.17%,#d3ceff 40.91%,#fbd0ff 46.75%,#ffb0d5 54.55%,#ff8195 70.13%,#ff5148 91.56%,#ff4424 97.4%,#ff3f00 99.35%,#ff3d00 100%)"></i>
<i style="left:19px;top:278px;width:309px;height:2px;background:linear-gradient(90deg,#00c6ff 0%,#00c8ff 23.3%,#32c9ff 25.24%,#5bc9ff 27.18%,#88caff 31.07%,#c7cbff 38.83%,#fdcdff 46.6%,#ff9fc2 58.25%,#ff636d 81.55%,#ff4940 93.2%,#ff4027 97.09%,#ff3b00 99.03%,#ff3800 100%)"></i>
<i style="left:19px;top:280px;width:311px;height:2px;background:linear-gradient(90deg,#00c4ff 0%,#00c6ff 23.15%,#35c7ff 25.08%,#5cc7ff 27.01%,#88c7ff 30.87%,#c7c8ff 38.59%,#fccaff 46.3%,#ff9dc3 57.88%,#ff616f 81.03%,#ff4643 92.6%,#ff3c2c 96.46%,#ff3718 98.39%,#ff3200 100%)"></i>
<i style="left:20px;top:282px;width:312px;height:2px;background:linear-gradient(90deg,#00c3ff 0%,#00c4ff 23.08%,#40c4ff 25%,#61c5ff 26.92%,#9dc5ff 32.69%,#fdc7ff 46.15%,#ff9ac3 57.69%,#ff6276 78.85%,#ff4344 92.31%,#ff382f 96.15%,#ff321d 98.08%,#ff2b00 100%)"></i>
<i style="left:20px;top:284px;width:314px;height:2px;background:linear-gradient(90deg,#00c1ff 0%,#00c2ff 22.93%,#42c2ff 24.84%,#62c2ff 26.75%,#8cc3ff 30.57%,#e3c4ff 42.04%,#fcc4ff 45.86%,#ff98c4 57.32%,#ff647e 76.43%,#ff3a3e 93.63%,#ff2e24 97.45%,#ff2600 99.36%,#ff2300 100%)"></i>
<i style="left:21px;top:286px;width:315px;height:2px;background:linear-gradient(90deg,#00c0ff 0%,#00c0ff 22.86%,#4ac0ff 24.76%,#67c0ff 26.67%,#8fc0ff 30.48%,#f1c1ff 43.81%,#fec1ff 45.71%,#ff95c4 57.14%,#ff617e 76.19%,#ff353f 93.33%,#ff2727 97.14%,#ff1d00 99.05%,#ff1600 100%)"></i>
<i style="left:21px;top:288px;width:316px;height:2px;background:linear-gradient(90deg,#00beff 0%,#00beff 22.78%,#4bbeff 24.68%,#68beff 26.58%,#9fbeff 32.28%,#fdbeff 45.57%,#ff92c5 56.96%,#ff6486 74.05%,#ff3142 93.04%,#ff202c 96.84%,#ff1118 98.73%,#ff0000 100%)"></i>
<i style="left:21px;top:290px;width:314px;height:2px;background:linear-gradient(90deg,#00bcff 0%,#00bcff 22.93%,#4dbcff 24.84%,#69bcff 26.75%,#9fbcff 32.48%,#fcbbff 45.86%,#ff8abe 59.24%,#ff4968 84.08%,#ff2c45 93.63%,#ff1730 97.45%,#ff0021 99.36%,#ff0019 100%)"></i>
<i style="left:22px;top:292px;width:309px;height:2px;background:linear-gradient(90deg,#00bbff 0%,#00baff 21.36%,#25baff 23.3%,#54baff 25.24%,#81b9ff 29.13%,#beb9ff 36.89%,#fdb8ff 46.6%,#ff8dc5 58.25%,#ff4f75 81.55%,#ff2d4e 93.2%,#ff183d 97.09%,#ff0032 99.03%,#ff002c 100%)"></i>
<i style="left:22px;top:294px;width:304px;height:2px;background:linear-gradient(90deg,#00b9ff 0%,#00b8ff 21.71%,#55b7ff 25.66%,#82b7ff 29.61%,#cbb6ff 39.47%,#fcb5ff 47.37%,#ff85be 61.18%,#ff2f57 92.76%,#ff1c48 96.71%,#ff0040 98.68%,#ff0039 100%)"></i>
<i style="left:23px;top:296px;width:299px;height:2px;background:linear-gradient(90deg,#00b7ff 0%,#00b6ff 22.07%,#37b5ff 24.08%,#5bb5ff 26.09%,#85b5ff 30.1%,#d9b3ff 42.14%,#feb2ff 48.16%,#ff87c6 60.2%,#ff5383 80.27%,#ff2858 94.31%,#ff1e51 96.32%,#ff0349 98.33%,#ff0042 100%)"></i>
<i style="left:23px;top:298px;width:295px;height:2px;background:linear-gradient(90deg,#00b6ff 0%,#00b4ff 22.37%,#39b3ff 24.41%,#5cb3ff 26.44%,#96b2ff 32.54%,#f1afff 46.78%,#fdafff 48.81%,#ff7fbf 63.05%,#ff3366 91.53%,#ff2159 95.59%,#ff004a 100%)"></i>
<i style="left:24px;top:300px;width:290px;height:2px;background:linear-gradient(90deg,#00b4ff 0%,#00b1ff 22.76%,#42b1ff 24.83%,#61b1ff 26.9%,#98b0ff 33.1%,#feacff 49.66%,#ff81c6 62.07%,#ff467f 84.83%,#ff2361 95.17%,#ff0054 99.31%,#ff0051 100%)"></i>
<i style="left:24px;top:302px;width:285px;height:2px;background:linear-gradient(90deg,#00b2ff 0%,#00afff 23.16%,#44afff 25.26%,#62afff 27.37%,#98adff 33.68%,#f2a9ff 48.42%,#fda8ff 50.53%,#ff79c0 65.26%,#ff2f6e 92.63%,#ff1962 96.84%,#ff005c 98.95%,#ff0059 100%)"></i>
<i style="left:25px;top:304px;width:280px;height:2px;background:linear-gradient(90deg,#00b1ff 0%,#00adff 23.57%,#4badff 25.71%,#66acff 27.86%,#9babff 34.29%,#fea5ff 51.43%,#ff7bc7 64.29%,#ff377a 90%,#ff1b69 96.43%,#ff0063 98.57%,#ff005f 100%)"></i>
<i style="left:25px;top:306px;width:276px;height:2px;background:linear-gradient(90deg,#00afff 0%,#00acff 21.74%,#11abff 23.91%,#4dabff 26.09%,#7baaff 30.43%,#b6a7ff 39.13%,#fea2ff 52.17%,#ff73c0 67.39%,#ff327c 91.3%,#ff1f70 95.65%,#ff006a 97.83%,#ff0064 100%)"></i>
<i style="left:26px;top:308px;width:270px;height:2px;background:linear-gradient(90deg,#00adff 0%,#00a9ff 22.22%,#53a8ff 26.67%,#7ea7ff 31.11%,#c5a4ff 42.22%,#ff9fff 53.33%,#ff6fc0 68.89%,#ff3482 91.11%,#ff2076 95.56%,#ff0a71 97.78%,#ff006b 100%)"></i>
<i style="left:26px;top:310px;width:266px;height:2px;background:linear-gradient(90deg,#00acff 0%,#00a7ff 22.56%,#54a6ff 27.07%,#7fa5ff 31.58%,#c4a1ff 42.86%,#fe9cff 54.14%,#ff73c8 67.67%,#ff3689 90.23%,#ff247d 94.74%,#ff0072 99.25%,#ff0070 100%)"></i>
<i style="left:27px;top:312px;width:261px;height:2px;background:linear-gradient(90deg,#00aaff 0%,#00a5ff 22.99%,#39a5ff 25.29%,#5aa4ff 27.59%,#82a2ff 32.18%,#c69eff 43.68%,#ff98ff 55.17%,#ff6fc8 68.97%,#ff2f89 91.95%,#ff167e 96.55%,#ff0078 98.85%,#ff0075 100%)"></i>
<i style="left:28px;top:314px;width:255px;height:2px;background:linear-gradient(90deg,#00a8ff 0%,#00a3ff 23.53%,#41a2ff 25.88%,#5fa2ff 28.24%,#949fff 35.29%,#df99ff 49.41%,#ff94fe 56.47%,#ff6bc8 70.59%,#ff308f 91.76%,#ff1883 96.47%,#ff007e 98.82%,#ff007b 100%)"></i>
<i style="left:28px;top:316px;width:251px;height:2px;background:linear-gradient(90deg,#00a7ff 0%,#00a1ff 23.9%,#43a0ff 26.29%,#5f9fff 28.69%,#859eff 33.47%,#d397ff 47.81%,#ff91fe 57.37%,#ff68c9 71.71%,#ff3395 90.84%,#ff1d8a 95.62%,#ff0085 98.01%,#ff0080 100%)"></i>
<i style="left:29px;top:318px;width:246px;height:2px;background:linear-gradient(90deg,#00a5ff 0%,#009fff 24.39%,#4a9eff 26.83%,#649dff 29.27%,#979aff 36.59%,#f690ff 56.1%,#ff8dfd 58.54%,#ff64c8 73.17%,#ff359b 90.24%,#ff1f90 95.12%,#ff008a 97.56%,#ff0085 100%)"></i>
<i style="left:29px;top:320px;width:241px;height:2px;background:linear-gradient(90deg,#00a3ff 0%,#009dff 22.41%,#159cff 24.9%,#4b9cff 27.39%,#659bff 29.88%,#9798ff 37.34%,#f58cff 57.26%,#ff8afe 59.75%,#ff60c9 74.69%,#ff2e9c 92.12%,#ff2397 94.61%,#ff008b 99.59%,#ff008b 100%)"></i>
<i style="left:30px;top:322px;width:236px;height:2px;background:linear-gradient(90deg,#00a1ff 0%,#009bff 22.88%,#5199ff 27.97%,#7b97ff 33.05%,#bf91ff 45.76%,#ff85fd 61.02%,#ff5cc9 76.27%,#ff30a2 91.53%,#ff259c 94.07%,#ff0091 99.15%,#ff008f 100%)"></i>
<i style="left:30px;top:324px;width:232px;height:2px;background:linear-gradient(90deg,#00a0ff 0%,#0099ff 23.28%,#2d98ff 25.86%,#5397ff 28.45%,#7c95ff 33.62%,#ca8dff 49.14%,#ff82fe 62.07%,#ff58ca 77.59%,#ff33a9 90.52%,#ff199d 95.69%,#ff0098 98.28%,#ff0094 100%)"></i>
<i style="left:31px;top:326px;width:227px;height:2px;background:linear-gradient(90deg,#009eff 0%,#0097ff 23.79%,#3896ff 26.43%,#5895ff 29.07%,#8e91ff 37%,#d788ff 52.86%,#ff7efd 63.44%,#ff53c9 79.3%,#ff2aa9 92.51%,#ff1ba3 95.15%,#ff009d 97.8%,#ff0099 100%)"></i>
<i style="left:32px;top:328px;width:221px;height:2px;background:linear-gradient(90deg,#009cff 0%,#0094ff 24.43%,#4193ff 27.15%,#5d92ff 29.86%,#908eff 38.01%,#d884ff 54.3%,#ff79fc 65.16%,#ff4ec9 81.45%,#ff2caf 92.31%,#ff1ea9 95.02%,#ff00a3 97.74%,#ff009e 100%)"></i>
<i style="left:32px;top:330px;width:217px;height:2px;background:linear-gradient(90deg,#009aff 0%,#0092ff 24.88%,#4291ff 27.65%,#5d90ff 30.41%,#918cff 38.71%,#ed7dff 60.83%,#ff76fc 66.36%,#ff39bc 88.48%,#ff22b0 94.01%,#ff00aa 96.77%,#ff00a3 100%)"></i>
<i style="left:33px;top:332px;width:212px;height:2px;background:linear-gradient(90deg,#0098ff 0%,#0091ff 22.64%,#0e90ff 25.47%,#498fff 28.3%,#758cff 33.96%,#ac86ff 45.28%,#f876ff 65.09%,#ff71fb 67.92%,#ff3bc3 87.74%,#ff24b6 93.4%,#ff09b0 96.23%,#ff00a8 100%)"></i>
<i style="left:34px;top:334px;width:206px;height:2px;background:linear-gradient(90deg,#0097ff 0%,#008fff 23.3%,#4f8cff 29.13%,#7889ff 34.95%,#ba81ff 49.51%,#f971ff 66.99%,#ff64f1 72.82%,#ff32c2 90.29%,#ff26bc 93.2%,#ff00b0 99.03%,#ff00ae 100%)"></i>
<i style="left:34px;top:336px;width:202px;height:2px;background:linear-gradient(90deg,#0095ff 0%,#008dff 23.76%,#508aff 29.7%,#7887ff 35.64%,#ae80ff 47.52%,#f96dff 68.32%,#ff60f2 74.26%,#ff2ac3 92.08%,#ff19bd 95.05%,#ff00b6 98.02%,#ff00b2 100%)"></i>
<i style="left:35px;top:338px;width:197px;height:2px;background:linear-gradient(90deg,#0093ff 0%,#008aff 24.37%,#3689ff 27.41%,#5587ff 30.46%,#7b84ff 36.55%,#b07dff 48.73%,#fa69ff 70.05%,#ff5bf1 76.14%,#ff2cca 91.37%,#ff1bc3 94.42%,#ff00bc 97.46%,#ff00b7 100%)"></i>
<i style="left:36px;top:340px;width:191px;height:2px;background:linear-gradient(90deg,#0091ff 0%,#0088ff 25.13%,#3e86ff 28.27%,#5a85ff 31.41%,#8d80ff 40.84%,#dd6fff 62.83%,#fb64ff 72.25%,#ff43df 84.82%,#ff2ed0 91.1%,#ff1ec9 94.24%,#ff00c3 97.38%,#ff00bd 100%)"></i>
<i style="left:36px;top:342px;width:187px;height:2px;background:linear-gradient(90deg,#008fff 0%,#0085ff 25.67%,#4084ff 28.88%,#5b82ff 32.09%,#7f7fff 38.5%,#c871ff 57.75%,#fa5fff 73.8%,#ff50f1 80.21%,#ff32d8 89.84%,#ff23d1 93.05%,#ff00ca 96.26%,#ff00c2 100%)"></i>
<i style="left:37px;top:344px;width:182px;height:2px;background:linear-gradient(90deg,#008dff 0%,#0083ff 26.37%,#4781ff 29.67%,#727eff 36.26%,#b473ff 52.75%,#fb5aff 75.82%,#ff34df 89.01%,#ff25d8 92.31%,#ff00d1 95.6%,#ff00c7 100%)"></i>
<i style="left:38px;top:346px;width:177px;height:2px;background:linear-gradient(90deg,#008bff 0%,#0082ff 23.73%,#4d7fff 30.51%,#757bff 37.29%,#aa72ff 50.85%,#f259ff 74.58%,#fc53ff 77.97%,#ff36e7 88.14%,#ff28df 91.53%,#ff0ad7 94.92%,#ff00d0 98.31%,#ff00cd 100%)"></i>
<i style="left:39px;top:348px;width:171px;height:2px;background:linear-gradient(90deg,#0089ff 0%,#007fff 24.56%,#317eff 28.07%,#527cff 31.58%,#7878ff 38.6%,#b76cff 56.14%,#fd4dff 80.7%,#ff2ae6 91.23%,#ff11de 94.74%,#ff00d7 98.25%,#ff00d3 100%)"></i>
<i style="left:39px;top:350px;width:167px;height:2px;background:linear-gradient(90deg,#0087ff 0%,#007dff 25.15%,#337bff 28.74%,#537aff 32.34%,#7975ff 39.52%,#c165ff 61.08%,#f34dff 79.04%,#fd46ff 82.63%,#ff2fef 89.82%,#ff1be7 93.41%,#ff00df 97.01%,#ff00d9 100%)"></i>
<i style="left:40px;top:352px;width:162px;height:2px;background:linear-gradient(90deg,#0085ff 0%,#007aff 25.93%,#3c79ff 29.63%,#5877ff 33.33%,#8a70ff 44.44%,#d758ff 70.37%,#fe3eff 85.19%,#ff1eee 92.59%,#ff00e6 96.3%,#ff00de 100%)"></i>
<i style="left:41px;top:354px;width:156px;height:2px;background:linear-gradient(90deg,#0083ff 0%,#0078ff 26.92%,#4376ff 30.77%,#6f72ff 38.46%,#a467ff 53.85%,#e24dff 76.92%,#ff33ff 88.46%,#ff21f6 92.31%,#ff00ee 96.15%,#ff00e6 100%)"></i>
<i style="left:42px;top:356px;width:151px;height:2px;background:linear-gradient(90deg,#0081ff 0%,#0077ff 23.84%,#1d75ff 27.81%,#4973ff 31.79%,#726eff 39.74%,#a663ff 55.63%,#e346ff 79.47%,#f634ff 87.42%,#ff24ff 91.39%,#ff00f5 95.36%,#ff00ec 100%)"></i>
<i style="left:42px;top:358px;width:147px;height:2px;background:linear-gradient(90deg,#007fff 0%,#0075ff 24.49%,#2173ff 28.57%,#4a70ff 32.65%,#726cff 40.82%,#a65fff 57.14%,#d947ff 77.55%,#ec36ff 85.71%,#f528ff 89.8%,#ff00ff 93.88%,#ff00f2 100%)"></i>
<i style="left:43px;top:360px;width:141px;height:2px;background:linear-gradient(90deg,#007cff 0%,#0072ff 25.53%,#2f70ff 29.79%,#506dff 34.04%,#7568ff 42.55%,#a85bff 59.57%,#da40ff 80.85%,#ed2aff 89.36%,#f60bff 93.62%,#ff00fe 97.87%,#ff00fa 100%)"></i>
<i style="left:44px;top:362px;width:136px;height:2px;background:linear-gradient(90deg,#007aff 0%,#006fff 26.47%,#386dff 30.88%,#546aff 35.29%,#7865ff 44.12%,#b452ff 66.18%,#dc37ff 83.82%,#e52bff 88.24%,#ee12ff 92.65%,#f700ff 97.06%,#fe00ff 100%)"></i>
<i style="left:45px;top:364px;width:131px;height:2px;background:linear-gradient(90deg,#0078ff 0%,#006cff 27.48%,#3f6aff 32.06%,#5967ff 36.64%,#895eff 50.38%,#ca40ff 77.86%,#dd2bff 87.02%,#ef00ff 96.18%,#f700ff 100%)"></i>
<i style="left:46px;top:366px;width:125px;height:2px;background:linear-gradient(90deg,#0075ff 0%,#006bff 24%,#1269ff 28.8%,#4666ff 33.6%,#6f61ff 43.2%,#a251ff 62.4%,#cb38ff 81.6%,#d52cff 86.4%,#e700ff 96%,#ef00ff 100%)"></i>
<i style="left:46px;top:368px;width:121px;height:2px;background:linear-gradient(90deg,#0073ff 0%,#0069ff 24.79%,#1966ff 29.75%,#4763ff 34.71%,#6f5dff 44.63%,#a24dff 64.46%,#cb2fff 84.3%,#d41fff 89.26%,#de00ff 94.21%,#e800ff 100%)"></i>
<i style="left:47px;top:370px;width:116px;height:2px;background:linear-gradient(90deg,#0071ff 0%,#0066ff 25.86%,#2a63ff 31.03%,#4c60ff 36.21%,#7259ff 46.55%,#af41ff 72.41%,#c330ff 82.76%,#cc21ff 87.93%,#d500ff 93.1%,#e200ff 100%)"></i>
<i style="left:48px;top:372px;width:111px;height:2px;background:linear-gradient(90deg,#006eff 0%,#0062ff 27.03%,#3460ff 32.43%,#515cff 37.84%,#7555ff 48.65%,#a641ff 70.27%,#c423ff 86.49%,#cd00ff 91.89%,#db00ff 100%)"></i>
<i style="left:49px;top:374px;width:105px;height:2px;background:linear-gradient(90deg,#006bff 0%,#005fff 28.57%,#3c5cff 34.29%,#5659ff 40%,#7851ff 51.43%,#a83aff 74.29%,#bc24ff 85.71%,#c500ff 91.43%,#d300ff 100%)"></i>
<i style="left:50px;top:376px;width:100px;height:2px;background:linear-gradient(90deg,#0069ff 0%,#005cff 30%,#4258ff 36%,#6c51ff 48%,#9f3aff 72%,#b425ff 84%,#bd00ff 90%,#cd00ff 100%)"></i>
<i style="left:51px;top:378px;width:95px;height:2px;background:linear-gradient(90deg,#0066ff 0%,#005bff 25.26%,#4854ff 37.89%,#6f4cff 50.53%,#a132ff 75.79%,#ab26ff 82.11%,#b50bff 88.42%,#bf00ff 94.74%,#c600ff 100%)"></i>
<i style="left:52px;top:380px;width:89px;height:2px;background:linear-gradient(90deg,#0063ff 0%,#0058ff 26.97%,#2d54ff 33.71%,#4d50ff 40.45%,#7247ff 53.93%,#9832ff 74.16%,#a327ff 80.9%,#b700ff 94.38%,#bf00ff 100%)"></i>
<i style="left:53px;top:382px;width:84px;height:2px;background:linear-gradient(90deg,#0060ff 0%,#0054ff 28.57%,#3650ff 35.71%,#524cff 42.86%,#823bff 64.29%,#9a28ff 78.57%,#ae00ff 92.86%,#b800ff 100%)"></i>
<i style="left:54px;top:384px;width:79px;height:2px;background:linear-gradient(90deg,#005dff 0%,#0050ff 30.38%,#3e4bff 37.97%,#6841ff 53.16%,#9029ff 75.95%,#a600ff 91.14%,#b200ff 100%)"></i>
<i style="left:55px;top:386px;width:73px;height:2px;background:linear-gradient(90deg,#005aff 0%,#004fff 24.66%,#124bff 32.88%,#4447ff 41.1%,#6c3bff 57.53%,#872aff 73.97%,#921aff 82.19%,#9d00ff 90.41%,#a900ff 100%)"></i>
<i style="left:57px;top:388px;width:67px;height:2px;background:linear-gradient(90deg,#0056ff 0%,#004aff 26.87%,#2f46ff 35.82%,#4d41ff 44.78%,#7133ff 62.69%,#7f29ff 71.64%,#8b18ff 80.6%,#9600ff 89.55%,#a300ff 100%)"></i>
<i style="left:58px;top:390px;width:62px;height:2px;background:linear-gradient(90deg,#0052ff 0%,#0046ff 29.03%,#3741ff 38.71%,#523aff 48.39%,#7429ff 67.74%,#811aff 77.42%,#8d00ff 87.1%,#9c00ff 100%)"></i>
<i style="left:59px;top:392px;width:56px;height:2px;background:linear-gradient(90deg,#004eff 0%,#0041ff 32.14%,#3e3bff 42.86%,#682aff 64.29%,#761cff 75%,#8300ff 85.71%,#9300ff 100%)"></i>
<i style="left:61px;top:394px;width:50px;height:2px;background:linear-gradient(90deg,#0049ff 0%,#0040ff 24%,#4833ff 48%,#6d1aff 72%,#7b00ff 84%,#8b00ff 100%)"></i>
<i style="left:63px;top:396px;width:44px;height:2px;background:linear-gradient(90deg,#0044ff 0%,#0039ff 27.27%,#3632ff 40.91%,#5128ff 54.55%,#6318ff 68.18%,#7300ff 81.82%,#8400ff 100%)"></i>
<i style="left:65px;top:398px;width:38px;height:2px;background:linear-gradient(90deg,#003eff 0%,#0038ff 15.79%,#0c31ff 31.58%,#4227ff 47.37%,#6900ff 78.95%,#7c00ff 100%)"></i>
<i style="left:67px;top:400px;width:31px;height:2px;background:linear-gradient(90deg,#0037ff 0%,#0030ff 19.35%,#2c26ff 38.71%,#4b14ff 58.06%,#5f00ff 77.42%,#7100ff 100%)"></i>
<i style="left:69px;top:402px;width:25px;height:2px;background:linear-gradient(90deg,#002fff 0%,#0024ff 24%,#3b11ff 48%,#5300ff 72%,#6800ff 100%)"></i>
<i style="left:71px;top:404px;width:19px;height:2px;background:linear-gradient(90deg,#0023ff 0%,#1f0eff 31.58%,#4500ff 63.16%,#5d00ff 100%)"></i>
<i style="left:74px;top:406px;width:11px;height:2px;background:linear-gradient(90deg,#0000ff 0%,#3800ff 54.55%,#4e00ff 100%)"></i>
</div>
<b style="left:45.0px;top:0;width:1px;height:100%"></b>
<b style="left:90.6px;top:0;width:1px;height:100%"></b>
<b style="left:136.2px;top:0;width:1px;height:100%"></b>
<b style="left:181.8px;top:0;width:1px;height:100%"></b>
<b style="left:227.4px;top:0;width:1px;height:100%"></b>
<b style="left:273.0px;top:0;width:1px;height:100%"></b>
<b style="left:318.6px;top:0;width:1px;height:100%"></b>
<b style="left:364.2px;top:0;width:1px;height:100%"></b>
<b style="left:0;top:363.8px;height:1px;width:100%"></b>
<b style="left:0;top:318.2px;height:1px;width:100%"></b>
<b style="left:0;top:272.6px;height:1px;width:100%"></b>
<b style="left:0;top:227.0px;height:1px;width:100%"></b>
<b style="left:0;top:181.4px;height:1px;width:100%"></b>
<b style="left:0;top:135.8px;height:1px;width:100%"></b>
<b style="left:0;top:90.2px;height:1px;width:100%"></b>
<b style="left:0;top:44.6px;height:1px;width:100%"></b>
<svg width="402" height="409"><polygon points="68.0,33.6 266.0,227.5 60.0,388.0" fill="none" stroke="#000" stroke-width="1.35"/><polygon points="140.2,137.0 285.0,257.0 73.0,371.0" fill="none" stroke="#f3aa2e" stroke-width="1.5"/></svg>
<s style="left:76.1px;top:391px;width:30px;text-align:center">0.2</s>
<s style="left:4.5px;top:310.7px">0.2</s>
<s style="left:167.3px;top:391px;width:30px;text-align:center">0.4</s>
<s style="left:4.5px;top:219.5px">0.4</s>
<s style="left:258.5px;top:391px;width:30px;text-align:center">0.6</s>
<s style="left:4.5px;top:128.3px">0.6</s>
<s style="left:349.7px;top:391px;width:30px;text-align:center">0.8</s>
<s style="left:4.5px;top:37.1px">0.8</s>
<s style="left:4px;top:391px">0</s>
<s style="left:5.5px;top:1px">y</s>
<s style="left:399.5px;top:391px">x</s>
<div class="bt"></div><div class="bl"></div><div class="bb"></div>
<span class="t" style="left:268.5px;top:80.5px;font-size:21.5px;font-weight:bold;letter-spacing:-.2px">Monitor</span>
<span class="t" style="left:268.5px;top:106.5px;font-size:21.5px;font-weight:bold;color:#f0a42e;letter-spacing:.3px">sRGB</span>
</div>

<div id="bc" class="a">
<s style="left:3px;top:0px">10 d E 94</s>
<b style="left:0;top:81.7px;width:100%;height:1px"></b>
<s style="left:3px;top:73.9px">8 d E 94</s>
<b style="left:0;top:162.9px;width:100%;height:1px"></b>
<s style="left:3px;top:155.1px">6 d E 94</s>
<b style="left:0;top:244.1px;width:100%;height:1px"></b>
<s style="left:3px;top:236.3px">4 d E 94</s>
<b style="left:0;top:325.3px;width:100%;height:1px"></b>
<s style="left:3px;top:317.5px">2 d E 94</s>
<svg width="410" height="409" style="position:absolute;left:0;top:0" stroke="#0a0a0a" stroke-width="1.55"><rect x="72.75" y="255.0" width="14.3" height="156.7" fill="#333333"/>
<rect x="92.03" y="312.6" width="14.3" height="99.0" fill="#484848"/>
<rect x="111.30" y="373.6" width="14.3" height="38.0" fill="#8c8c8c"/>
<rect x="130.58" y="386.6" width="14.3" height="25.1" fill="#c8c8c8"/>
<rect x="169.13" y="128.5" width="14.3" height="283.1" fill="#ff0000"/>
<rect x="188.40" y="-1.7" width="14.3" height="413.3" fill="#00ff00"/>
<rect x="207.67" y="259.6" width="14.3" height="152.0" fill="#0000ff"/>
<rect x="226.95" y="378.4" width="14.3" height="33.2" fill="#00ffff"/>
<rect x="246.23" y="308.1" width="14.3" height="103.5" fill="#ff00ff"/>
<rect x="265.50" y="103.4" width="14.3" height="308.3" fill="#ffff00"/>
<rect x="284.77" y="312.8" width="14.3" height="98.8" fill="#b05a5a"/>
<rect x="304.05" y="222.7" width="14.3" height="189.0" fill="#55a855"/>
<rect x="323.32" y="280.6" width="14.3" height="131.0" fill="#5858b0"/>
<rect x="342.60" y="354.6" width="14.3" height="57.1" fill="#55aaaa"/>
<rect x="361.88" y="304.7" width="14.3" height="106.9" fill="#b058b0"/>
<rect x="381.15" y="259.6" width="14.3" height="152.0" fill="#b0aa5a"/><rect x=".75" y=".75" width="409.0" height="408.0" fill="none" stroke="#111" stroke-width="1.5"/></svg>
</div>

<span class="t tx" style="left:176px;top:608px">Target</span>
<span class="t tx" style="left:279.5px;top:608px">Current</span>
<span class="t tx" style="left:381px;top:608px">Deviation</span>
<span class="t tx" style="left:74.5px;top:632px">Gamma</span>
<span class="t tx" style="left:176.5px;top:632px">2.2</span>
<span class="t tx gr" style="left:279.5px;top:632px">2.3</span>
<span class="t tx gr" style="left:381.5px;top:632px">4%</span>
<span class="t tx" style="left:74.5px;top:656px">Kelvin</span>
<span class="t tx" style="left:176.5px;top:656px">6500</span>
<span class="t tx or" style="left:279.5px;top:656px">8973</span>
<span class="t tx or" style="left:381.5px;top:656px">38%</span>
<span class="t tx" style="left:74.5px;top:680px">cd/m2</span>
<span class="t tx" style="left:176.5px;top:680px">120</span>
<span class="t tx or" style="left:279.5px;top:680px">189</span>
<span class="t tx or" style="left:381.5px;top:680px">57%</span>

<span class="t tx" style="left:516.5px;top:608px;letter-spacing:-.1px">Delta E Average</span>
<span class="t tx or" style="left:697px;top:608px">3.2</span>
<span class="t tx" style="left:516.5px;top:632px">Delta E Maximum</span>
<span class="t tx or" style="left:693.5px;top:632px">10.4</span>

<div class="btn def" style="left:30.5px;top:745px;letter-spacing:-.15px;width:112px;padding-right:3px">Main Menu</div>
<div class="btn" style="left:167px;top:745px;width:113px;padding-right:2px">Calibration</div>
<div class="btn" style="left:716.5px;top:745px;width:112px;padding-right:3px">Save</div>
<div class="btn" style="left:852.5px;top:745px;width:112px;padding-right:3px">Quit</div>
</body></html>
